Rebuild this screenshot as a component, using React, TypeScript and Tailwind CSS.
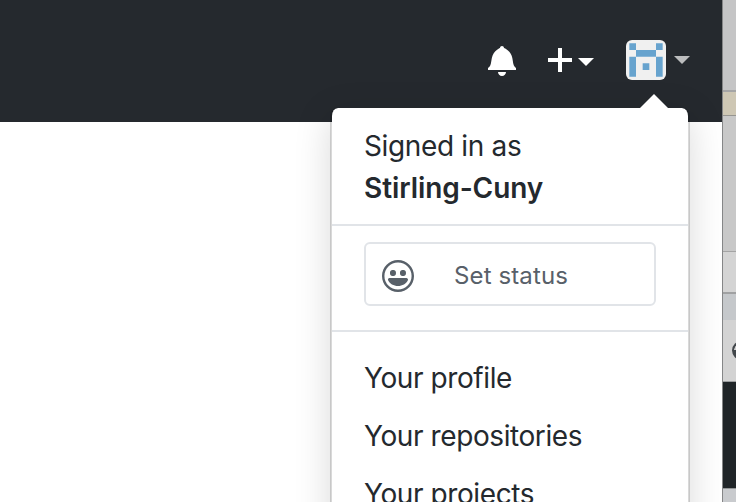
const font = "font-['Inter','Liberation_Sans',sans-serif]";

function Bell() {
  return (
    <svg className="block h-8 w-7" viewBox="0 0 14 16" fill="currentColor">
      <path d="M14 12v1H0v-1l.73-.58c.77-.77.81-2.55 1.19-4.42C2.69 3.23 6 2 6 2c0-.55.45-1 1-1s1 .45 1 1c0 0 3.39 1.23 4.16 5 .38 1.88.42 3.66 1.19 4.42l.66.58H14zm-7 4c1.11 0 2-.89 2-2H5c0 1.11.89 2 2 2z" />
    </svg>
  );
}

function Plus() {
  return (
    <svg className="block h-8 w-6" viewBox="0 0 12 16" fill="currentColor">
      <path d="M12 9H7v5H5V9H0V7h5V2h2v5h5v2z" />
    </svg>
  );
}

function Caret({ className }: { className: string }) {
  return (
    <svg className={`block h-2 w-4 ${className}`} viewBox="0 0 16 8" fill="currentColor">
      <path d="M0 0h16L8 8z" />
    </svg>
  );
}

function Smiley() {
  return (
    <svg className="block size-8 shrink-0" viewBox="0 0 16 16" fill="currentColor" fillRule="evenodd">
      <path d="M8 0C3.58 0 0 3.58 0 8s3.58 8 8 8 8-3.58 8-8-3.58-8-8-8zm4.81 12.81a6.72 6.72 0 0 1-2.17 1.45c-.83.36-1.72.53-2.64.53-.92 0-1.81-.17-2.64-.53-.81-.34-1.55-.83-2.17-1.45a6.773 6.773 0 0 1-1.45-2.17A6.59 6.59 0 0 1 1.21 8c0-.92.17-1.81.53-2.64.34-.81.83-1.55 1.45-2.17.62-.62 1.36-1.11 2.17-1.45A6.59 6.59 0 0 1 8 1.21c.92 0 1.81.17 2.64.53.81.34 1.55.83 2.17 1.45.62.62 1.11 1.36 1.45 2.17.36.83.53 1.72.53 2.64 0 .92-.17 1.81-.53 2.64-.34.81-.83 1.55-1.45 2.17zM4 6.8v-.59c0-.66.53-1.19 1.2-1.19h.59c.66 0 1.19.53 1.19 1.19v.59c0 .67-.53 1.2-1.19 1.2H5.2C4.53 8 4 7.47 4 6.8zm5 0v-.59c0-.66.53-1.19 1.2-1.19h.59c.66 0 1.19.53 1.19 1.19v.59c0 .67-.53 1.2-1.19 1.2h-.59C9.53 8 9 7.47 9 6.8zm4 3.2c-.72 1.88-2.91 3-5 3s-4.28-1.13-5-3c-.14-.39.23-1 .66-1h8.59c.41 0 .89.61.75 1z" />
    </svg>
  );
}

function Avatar() {
  return (
    <svg className="block size-10 rounded-md bg-[#f0f0f0]" viewBox="0 0 12 12" fill="#67a3ce">
      <path d="M1 1h2v2H1zM9 1h2v2H9zM3 3h6v2H3zM1 5h2v6H1zM9 5h2v6H9zM5 7h2v2H5z" />
    </svg>
  );
}

function UserMenu() {
  return (
    <div className="absolute top-[108px] left-[330px] h-[460px] w-[360px] rounded-lg border-2 border-t-0 border-black/15 bg-white bg-clip-padding text-[#24292e] shadow-[0_8px_36px_rgba(0,0,0,0.15)]">
      <svg className="absolute -top-[14px] left-[308px] h-[14px] w-7" viewBox="0 0 28 14" fill="white">
        <path d="M14 0l14 14H0z" />
      </svg>
      <div className="h-[118px] border-b-2 border-[#e1e4e8] px-8 pt-[17px] text-[28px] leading-[42px]">
        <div className="tracking-[-0.35px]">Signed in as</div>
        <div className="font-semibold tracking-[-0.08px]">Stirling-Cuny</div>
      </div>
      <div className="h-[106px] border-b-2 border-[#e1e4e8] px-8 pt-4">
        <div className="flex h-16 items-center rounded-md border-2 border-[#e1e4e8] pt-1 pl-4 text-[#586069]">
          <Smiley />
          <span className="ml-10 text-[24px] leading-9 tracking-[0.12px]">Set status</span>
        </div>
      </div>
      <div className="px-8 pt-[17px] text-[28px] leading-[58px] tracking-[-0.41px]">
        <div>Your profile</div>
        <div>Your repositories</div>
        <div>Your projects</div>
      </div>
    </div>
  );
}

function BackgroundWindow() {
  return (
    <div className="flex w-[14px] shrink-0 flex-col overflow-hidden border-l border-[#858687] bg-[#c7c7c7]">
      <div className="h-[90px] shrink-0 bg-[#c5c5c6]" />
      <div className="h-[26px] shrink-0 border-t-2 border-b border-t-[#a5a5a6] border-b-[#969590] bg-[#cec7b4]" />
      <div className="h-[135px] shrink-0 bg-[#c8c8c8]" />
      <div className="h-[43px] shrink-0 border-t border-b-2 border-t-[#a4a4a4] border-b-[#a0a1a2] bg-[#d4d4d4]" />
      <div className="h-[26px] shrink-0 bg-[#c5c8cb]" />
      <div className="h-[62px] shrink-0 overflow-hidden border-b border-[#9b9d9e] bg-[#d3d3d3] pt-[21px] pl-[9px]">
        <svg className="block size-[19px]" viewBox="0 0 19 19">
          <circle cx="9.5" cy="9.5" r="9.5" fill="#42474b" />
          <path d="M2 8.5l1.5-3.5H12v4H2z" fill="#d3d3d3" />
        </svg>
      </div>
      <div className="h-[107px] shrink-0 border-b border-[#929596] bg-[#202528]" />
      <div className="grow bg-[#c9cbce]" />
    </div>
  );
}

export default function App() {
  return (
    <div className={`relative flex h-[502px] w-[736px] overflow-hidden bg-white ${font}`}>
      <div className="relative w-[722px] shrink-0 overflow-hidden bg-white">
        <header className="flex h-[122px] items-start justify-end bg-[#25292e] pt-10 pr-8 text-white">
          <div className="mt-1"><Bell /></div>
          <div className="mt-1 ml-8"><Plus /></div>
          <Caret className="mt-[18px] ml-1.5" />
          <div className="ml-8"><Avatar /></div>
          <Caret className="mt-4 ml-2 text-[#bcbdbe]" />
        </header>
        <UserMenu />
      </div>
      <BackgroundWindow />
    </div>
  );
}
